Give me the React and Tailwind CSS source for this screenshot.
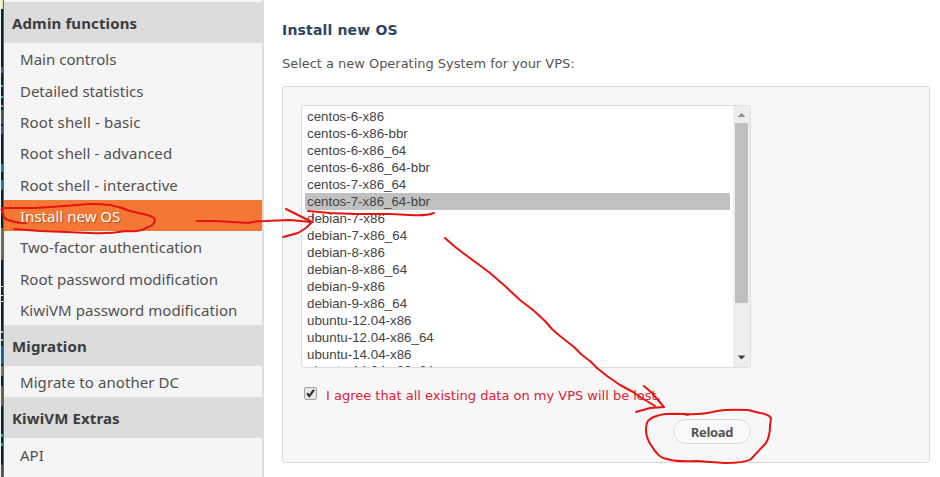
const ADMIN = [
  { label: 'Main controls', cls: 'tracking-[0.03px]' },
  { label: 'Detailed statistics', cls: 'tracking-[-0.02px]' },
  { label: 'Root shell - basic', cls: 'tracking-[0.15px]' },
  { label: 'Root shell - advanced', cls: 'tracking-[0.11px]' },
  { label: 'Root shell - interactive', cls: 'tracking-[0.08px]' },
  { label: 'Install new OS', cls: 'tracking-[0.02px]', active: true },
  { label: 'Two-factor authentication', cls: 'tracking-[0.01px]' },
  { label: 'Root password modification', cls: 'tracking-[0.03px]' },
  { label: 'KiwiVM password modification', cls: 'tracking-[0.06px]' },
];

const SYSTEMS = [
  'centos-6-x86',
  'centos-6-x86-bbr',
  'centos-6-x86_64',
  'centos-6-x86_64-bbr',
  'centos-7-x86_64',
  'centos-7-x86_64-bbr',
  'debian-7-x86',
  'debian-7-x86_64',
  'debian-8-x86',
  'debian-8-x86_64',
  'debian-9-x86',
  'debian-9-x86_64',
  'ubuntu-12.04-x86',
  'ubuntu-12.04-x86_64',
  'ubuntu-14.04-x86',
  'ubuntu-14.04-x86_64',
];

function Heading({ children }) {
  return (
    <h2 className="flex h-[41px] shrink-0 items-center bg-[#dcdcdc] pt-px pl-2 text-[15px] font-bold tracking-[0.13px] text-[#3c3c3c]">
      <span>{children}</span>
    </h2>
  );
}

function Item({ label, cls = '', active }) {
  return (
    <li
      className={
        'flex h-[31.33px] items-center pt-[2px] pl-4 text-[15px] whitespace-nowrap ' +
        (active
          ? 'bg-[#f37735] text-white [text-shadow:1px_1px_1px_rgba(0,0,0,0.3)]'
          : 'text-[#505050]')
      }
    >
      <span className={cls}>{label}</span>
    </li>
  );
}

function Sidebar() {
  return (
    <nav className="flex w-[260px] shrink-0 flex-col border-r-2 border-[#dddddd] bg-[#f5f5f5] pt-[2px] font-['Noto_Sans',sans-serif]">
      <Heading>Admin functions</Heading>
      <ul>
        {ADMIN.map((item) => (
          <Item key={item.label} {...item} />
        ))}
      </ul>
      <Heading>Migration</Heading>
      <ul>
        <Item label="Migrate to another DC" cls="tracking-[0.07px]" />
      </ul>
      <Heading>KiwiVM Extras</Heading>
      <ul>
        <Item label="API" />
      </ul>
    </nav>
  );
}

// Sliver of the desktop wallpaper showing at the window's left edge.
function DesktopEdge() {
  return (
    <svg className="h-full w-1 shrink-0" viewBox="0 0 4 477" shapeRendering="crispEdges">
      <rect width="4" height="477" fill="#f4f4f4" />
      <rect x="1" width="2" height="477" fill="#06262e" />
      <rect x="3" width="1" height="477" fill="#1c7f86" />
      <rect x="1" width="2" height="9" fill="#ece7b0" />
      <rect x="1" y="67" width="2" height="6" fill="#3f5c92" />
      <rect x="1" y="85" width="2" height="2" fill="#4fb0a8" />
      <rect x="1" y="96" width="2" height="2" fill="#4fb0a8" />
      <rect x="1" y="105" width="2" height="2" fill="#4fb0a8" />
      <rect x="1" y="110" width="2" height="14" fill="#3d5a57" />
      <rect x="1" y="126" width="2" height="8" fill="#35558c" />
      <rect x="1" y="164" width="2" height="8" fill="#1d7fc0" />
      <rect x="1" y="180" width="2" height="10" fill="#2277b5" />
      <rect x="1" y="228" width="2" height="32" fill="#6b6b58" />
      <rect x="1" y="286" width="2" height="1" fill="#cfeef0" />
      <rect x="1" y="295" width="2" height="1" fill="#cfeef0" />
      <rect x="1" y="301" width="2" height="1" fill="#cfeef0" />
      <rect x="1" y="331" width="2" height="2" fill="#8fd0dc" />
      <rect x="1" y="339" width="2" height="2" fill="#8fd0dc" />
      <rect x="1" y="346" width="2" height="18" fill="#10629a" />
      <rect x="1" y="366" width="2" height="10" fill="#7c7458" />
      <rect x="1" y="386" width="2" height="20" fill="#5f6350" />
      <rect x="1" y="434" width="2" height="3" fill="#2598b8" />
      <rect x="1" y="443" width="2" height="3" fill="#2598b8" />
      <rect x="1" y="465" width="2" height="12" fill="#4f5a48" />
    </svg>
  );
}

function SystemList() {
  return (
    <div className="flex h-[263px] w-[450px] overflow-hidden rounded-[3px] border border-[#dedede] bg-white">
      <ul className="flex-1 pt-[2px] pl-[3px] font-['Liberation_Sans',Arial,sans-serif] text-[13.33px] leading-[17px] text-[#444444]">
        {SYSTEMS.map((name) => (
          <li
            key={name}
            className={
              'mr-[3px] h-[17px] pl-[2px] last:-mt-px ' +
              (name === 'centos-7-x86_64-bbr' ? 'bg-[#c1c1c1]' : '')
            }
          >
            {name}
          </li>
        ))}
      </ul>
      <div className="flex w-[17px] flex-col items-center bg-[#eeeeee]">
        <svg className="h-[17px] w-[17px] shrink-0" viewBox="0 0 17 17">
          <path d="M4.5 11h8l-4-4z" fill="#8d8d8d" />
        </svg>
        <div className="mr-px h-[180px] w-[13px] bg-[#bfbfbf]" />
        <svg className="mt-auto h-[17px] w-[17px] shrink-0" viewBox="0 0 17 17">
          <path d="M4.5 5.5h8l-4 4z" fill="#404040" />
        </svg>
      </div>
    </div>
  );
}

function Consent() {
  return (
    <label className="mt-[18px] flex h-[20px] items-center pl-[3px]">
      <svg className="mb-[5px] h-[13px] w-[13px] shrink-0" viewBox="0 0 13 13">
        <rect x=".5" y=".5" width="12" height="12" rx="1.5" fill="#e6e6e6" stroke="#a3a3a3" />
        <path d="M3 6.3l2.3 2.6L10 2.8" fill="none" stroke="#333333" strokeWidth="2.2" />
      </svg>
      <span className="ml-[9px] text-[13px] tracking-[-0.01px] whitespace-nowrap text-[#dc2238]">
        I agree that all existing data on my VPS will be lost.
      </span>
    </label>
  );
}

// Freehand pen marks laid over the page.
function PenMarks() {
  return (
    <svg
      className="pointer-events-none absolute inset-0 h-full w-full"
      viewBox="0 0 940 477"
      fill="none"
      stroke="#e8130f"
      strokeWidth="2"
      strokeLinecap="round"
      strokeLinejoin="round"
    >
      <path d="M26 223Q16 223 8 220Q4 219 3 214Q1 210 2 208L36 208Q64 206 78 205Q92 203 110 205Q121 207 130 211L143 214Q154 216 155 220Q155 225 146 228Q141 232 126 231Q108 234 90 233L66 232L40 231L14 229" />
      <path d="M197 221L215 221L232 222L248 223Q256 221 265 221L290 220L311 222" />
      <path d="M286 209L296 214L312 222L306 228L298 233L283 237" />
      <path d="M313 213V219" strokeWidth="1.2" />
      <path d="M308 211L330 213L355 214L390 214L410 215Q426 216 434 213" />
      <path d="M445 238L454 246L463 253L478 264L490 273L505 286L520 300L533 310L545 321L552 329L560 336L574 347L582 355L590 361L597 368L607 376L620 385L633 392L640 397L655 406" />
      <path d="M644 386L652 393L664 407L650 408L636 412" />
      <path d="M688 415Q683 413 665 414Q653 416 649 420Q646 422 646 430Q646 438 651 445Q659 459 667 459Q676 462 696 461L725 463Q745 463 751 459L766 443Q770 436 770 426L771 418Q768 414 760 413L748 410Q728 409 717 411Q700 415 685 414L665 414" />
    </svg>
  );
}

export default function App() {
  return (
    <div className="relative flex h-[477px] w-[940px] overflow-hidden bg-white">
      <DesktopEdge />
      <Sidebar />
      <main className="flex flex-1 flex-col pt-[20px] pl-[18px] font-['DejaVu_Sans',Verdana,sans-serif]">
        <h1 className="h-[20px] text-[14px] leading-[20px] font-bold tracking-[0.17px] text-[#2d4560]">
          Install new OS
        </h1>
        <p className="mt-[14px] h-[20px] text-[13px] leading-[20px] tracking-[-0.03px] text-[#555555]">
          Select a new Operating System for your VPS:
        </p>
        <section className="mt-[12px] h-[377px] w-[648px] rounded-[3px] border border-[#dddddd] bg-[#f7f7f7] pt-[18px] pl-[18px]">
          <SystemList />
          <Consent />
          <button className="mt-[13px] ml-[372px] block h-[25px] w-[78px] rounded-full border border-[#d8d8d8] bg-[#f9f9f9] pt-px font-['Open_Sans',sans-serif] text-[13px] leading-[23px] font-bold tracking-[-0.3px] text-[#555555]">
            Reload
          </button>
        </section>
      </main>
      <PenMarks />
    </div>
  );
}
